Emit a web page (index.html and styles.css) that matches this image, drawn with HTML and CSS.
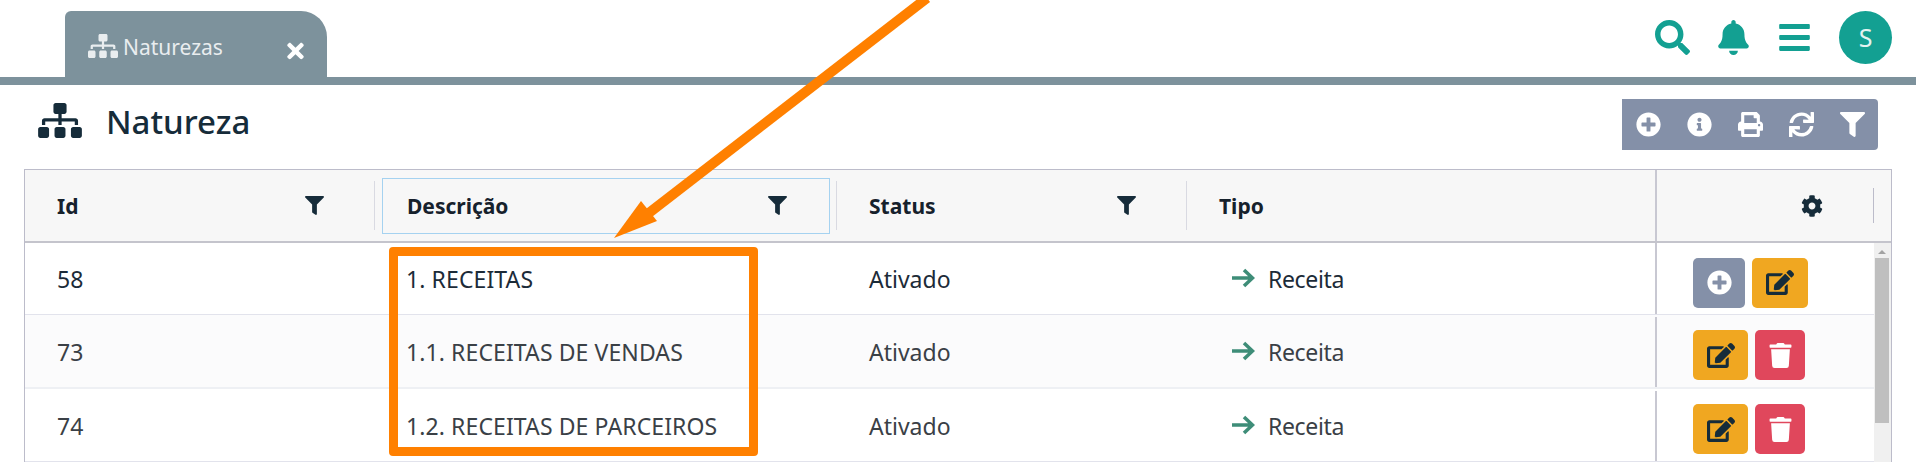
FILE: index.html
```html
<!DOCTYPE html>
<html lang="en">

<head>
    <meta charset="UTF-8">
    <title>Natureza</title>
    <link rel="stylesheet" href="styles.css">
</head>

<body>
    <svg class="sprite" xmlns="http://www.w3.org/2000/svg">
        <symbol id="i-sitemap" viewBox="0 0 640 512"><path d="M128 352H32c-17.67 0-32 14.33-32 32v96c0 17.67 14.33 32 32 32h96c17.67 0 32-14.33 32-32v-96c0-17.67-14.33-32-32-32zm-24-80h192v48h48v-48h192v48h48v-57.59c0-21.17-17.23-38.41-38.41-38.41H344v-64h40c17.67 0 32-14.33 32-32V32c0-17.67-14.33-32-32-32H256c-17.67 0-32 14.33-32 32v96c0 17.67 14.33 32 32 32h40v64H94.41C73.23 224 56 241.23 56 262.41V320h48v-48zm264 80h-96c-17.67 0-32 14.33-32 32v96c0 17.67 14.33 32 32 32h96c17.67 0 32-14.33 32-32v-96c0-17.67-14.33-32-32-32zm240 0h-96c-17.67 0-32 14.33-32 32v96c0 17.67 14.33 32 32 32h96c17.67 0 32-14.33 32-32v-96c0-17.67-14.33-32-32-32z"/></symbol>
        <symbol id="i-filter" viewBox="0 0 512 512"><path d="M487.976 0H24.028C2.71 0-8.047 25.866 7.058 40.971L192 225.941V432c0 7.831 3.821 15.17 10.237 19.662l80 55.98C298.02 518.69 320 507.493 320 487.98V225.941l184.947-184.97C520.021 25.896 509.338 0 487.976 0z"/></symbol>
        <symbol id="i-search" viewBox="0 0 512 512"><path d="M505 442.7L405.3 343c-4.5-4.5-10.6-7-17-7H372c27.6-35.3 44-79.7 44-128C416 93.1 322.9 0 208 0S0 93.1 0 208s93.1 208 208 208c48.3 0 92.7-16.4 128-44v16.3c0 6.4 2.5 12.5 7 17l99.7 99.7c9.4 9.4 24.6 9.4 33.9 0l28.3-28.3c9.4-9.4 9.4-24.6.1-34zM208 336c-70.7 0-128-57.2-128-128 0-70.7 57.2-128 128-128 70.7 0 128 57.2 128 128 0 70.7-57.2 128-128 128z"/></symbol>
        <symbol id="i-bell" viewBox="0 0 448 512"><path d="M224 512c35.32 0 63.97-28.65 63.97-64H160.03c0 35.35 28.65 64 63.97 64zm215.39-149.71c-19.32-20.76-55.47-51.99-55.47-154.29 0-77.7-54.48-139.9-127.94-155.16V32c0-17.67-14.32-32-31.98-32s-31.98 14.33-31.98 32v20.84C118.56 68.1 64.08 130.3 64.08 208c0 102.3-36.15 133.53-55.47 154.29-6 6.45-8.66 14.16-8.61 21.71.11 16.4 12.98 32 32.1 32h383.8c19.12 0 32-15.6 32.1-32 .05-7.55-2.61-15.27-8.61-21.71z"/></symbol>
        <symbol id="i-bars" viewBox="0 0 448 512"><path d="M16 132h416c8.837 0 16-7.163 16-16V76c0-8.837-7.163-16-16-16H16C7.163 60 0 67.163 0 76v40c0 8.837 7.163 16 16 16zm0 160h416c8.837 0 16-7.163 16-16v-40c0-8.837-7.163-16-16-16H16c-8.837 0-16 7.163-16 16v40c0 8.837 7.163 16 16 16zm0 160h416c8.837 0 16-7.163 16-16v-40c0-8.837-7.163-16-16-16H16c-8.837 0-16 7.163-16 16v40c0 8.837 7.163 16 16 16z"/></symbol>
        <symbol id="i-plus" viewBox="0 0 512 512"><path d="M256 8C119 8 8 119 8 256s111 248 248 248 248-111 248-248S393 8 256 8zm144 276c0 6.6-5.4 12-12 12h-92v92c0 6.6-5.4 12-12 12h-56c-6.6 0-12-5.4-12-12v-92h-92c-6.6 0-12-5.4-12-12v-56c0-6.6 5.4-12 12-12h92v-92c0-6.6 5.4-12 12-12h56c6.6 0 12 5.4 12 12v92h92c6.6 0 12 5.4 12 12v56z"/></symbol>
        <symbol id="i-info" viewBox="0 0 512 512"><path d="M256 8C119.043 8 8 119.083 8 256c0 136.997 111.043 248 248 248s248-111.003 248-248C504 119.083 392.957 8 256 8zm0 110c23.196 0 42 18.804 42 42s-18.804 42-42 42-42-18.804-42-42 18.804-42 42-42zm56 254c0 6.627-5.373 12-12 12h-88c-6.627 0-12-5.373-12-12v-24c0-6.627 5.373-12 12-12h12v-64h-12c-6.627 0-12-5.373-12-12v-24c0-6.627 5.373-12 12-12h64c6.627 0 12 5.373 12 12v100h12c6.627 0 12 5.373 12 12v24z"/></symbol>
        <symbol id="i-print" viewBox="0 0 512 512"><path d="M448 192V77.25c0-8.49-3.37-16.62-9.37-22.63L393.37 9.37c-6-6-14.14-9.37-22.63-9.37H96C78.33 0 64 14.33 64 32v160c-35.35 0-64 28.65-64 64v112c0 8.84 7.16 16 16 16h48v96c0 17.67 14.33 32 32 32h320c17.67 0 32-14.33 32-32v-96h48c8.84 0 16-7.16 16-16V256c0-35.35-28.65-64-64-64zm-64 256H128v-96h256v96zm0-224H128V64h192v48c0 8.84 7.16 16 16 16h48v96zm48 72c-13.25 0-24-10.75-24-24 0-13.26 10.75-24 24-24s24 10.74 24 24c0 13.25-10.75 24-24 24z"/></symbol>
        <symbol id="i-sync" viewBox="0 0 512 512"><path d="M440.65 12.57l4 82.77A247.16 247.16 0 0 0 255.83 8C134.73 8 33.91 94.92 12.29 209.82A12 12 0 0 0 24.09 224h49.05a12 12 0 0 0 11.67-9.26 175.91 175.91 0 0 1 317-56.94l-101.46-4.86a12 12 0 0 0-12.57 12v47.41a12 12 0 0 0 12 12H500a12 12 0 0 0 12-12V12a12 12 0 0 0-12-12h-47.37a12 12 0 0 0-11.98 12.57zM255.83 432a175.61 175.61 0 0 1-146-77.8l101.8 4.87a12 12 0 0 0 12.57-12v-47.4a12 12 0 0 0-12-12H12a12 12 0 0 0-12 12V500a12 12 0 0 0 12 12h47.35a12 12 0 0 0 12-12.6l-4.15-82.57A247.17 247.17 0 0 0 255.83 504c121.11 0 221.93-86.92 243.55-201.82a12 12 0 0 0-11.8-14.18h-49.05a12 12 0 0 0-11.67 9.26A175.86 175.86 0 0 1 255.83 432z"/></symbol>
        <symbol id="i-cog" viewBox="0 0 512 512"><path d="M487.4 315.7l-42.6-24.6c4.3-23.2 4.3-47 0-70.2l42.6-24.6c4.9-2.8 7.1-8.6 5.5-14-11.1-35.6-30-67.8-54.7-94.6-3.8-4.1-10-5.1-14.8-2.3L380.8 110c-17.9-15.4-38.5-27.3-60.8-35.1V25.8c0-5.6-3.9-10.5-9.4-11.7-36.7-8.2-74.3-7.8-109.2 0-5.5 1.2-9.4 6.1-9.4 11.7V75c-22.2 7.9-42.8 19.8-60.8 35.1L88.7 85.5c-4.9-2.8-11-1.9-14.8 2.3-24.7 26.7-43.6 58.9-54.7 94.6-1.7 5.4.6 11.2 5.5 14L67.3 221c-4.3 23.2-4.3 47 0 70.2l-42.6 24.6c-4.9 2.8-7.1 8.6-5.5 14 11.1 35.6 30 67.8 54.7 94.6 3.8 4.1 10 5.1 14.8 2.3l42.6-24.6c17.9 15.4 38.5 27.3 60.8 35.1v49.2c0 5.6 3.9 10.5 9.4 11.7 36.7 8.2 74.3 7.8 109.2 0 5.5-1.2 9.4-6.1 9.4-11.7v-49.2c22.2-7.9 42.8-19.8 60.8-35.1l42.6 24.6c4.9 2.8 11 1.9 14.8-2.3 24.7-26.7 43.6-58.9 54.7-94.6 1.5-5.5-.7-11.3-5.6-14.1zM256 336c-44.1 0-80-35.9-80-80s35.9-80 80-80 80 35.9 80 80-35.9 80-80 80z"/></symbol>
        <symbol id="i-times" viewBox="0 0 352 512"><path d="M242.72 256l100.07-100.07c12.28-12.28 12.28-32.19 0-44.48l-22.24-22.24c-12.28-12.28-32.19-12.28-44.48 0L176 189.28 75.93 89.21c-12.28-12.28-32.19-12.28-44.48 0L9.21 111.45c-12.28 12.28-12.28 32.19 0 44.48L109.28 256 9.21 356.07c-12.28 12.28-12.28 32.19 0 44.48l22.24 22.24c12.28 12.28 32.2 12.28 44.48 0L176 322.72l100.07 100.07c12.28 12.28 32.2 12.28 44.48 0l22.24-22.24c12.28-12.28 12.28-32.19 0-44.48L242.72 256z"/></symbol>
        <symbol id="i-edit" viewBox="0 0 576 512"><path d="M402.6 83.2l90.2 90.2c3.8 3.8 3.8 10 0 13.8L274.4 405.6l-92.8 10.3c-12.4 1.4-22.9-9.1-21.5-21.5l10.3-92.8L388.8 83.2c3.8-3.8 10-3.8 13.8 0zm162-22.9l-48.8-48.8c-15.2-15.2-39.9-15.2-55.2 0l-35.4 35.4c-3.8 3.8-3.8 10 0 13.8l90.2 90.2c3.8 3.8 10 3.8 13.8 0l35.4-35.4c15.2-15.3 15.2-40 0-55.2zM384 346.2V448H64V128h229.8c3.2 0 6.2-1.3 8.5-3.5l40-40c7.6-7.6 2.2-20.5-8.5-20.5H48C21.5 64 0 85.5 0 112v352c0 26.5 21.5 48 48 48h352c26.5 0 48-21.5 48-48V306.2c0-10.7-12.9-16-20.5-8.5l-40 40c-2.2 2.3-3.5 5.3-3.5 8.5z"/></symbol>
        <symbol id="i-trash" viewBox="0 0 448 512"><path d="M432 32H312l-9.4-18.7A24 24 0 0 0 281.1 0H166.8a23.72 23.72 0 0 0-21.4 13.3L136 32H16A16 16 0 0 0 0 48v32a16 16 0 0 0 16 16h416a16 16 0 0 0 16-16V48a16 16 0 0 0-16-16zM53.2 467a48 48 0 0 0 47.9 45h245.8a48 48 0 0 0 47.9-45L416 128H32z"/></symbol>
        <symbol id="i-arrow" viewBox="0 0 24 20"><path d="M1 10H21M13 2l8.500 8-8.500 8" fill="none" stroke="currentColor" stroke-width="3.6"/></symbol>
    </svg>

    <header class="topbar">
        <div class="tab">
            <svg class="tab-icon"><use href="#i-sitemap"/></svg>
            <span class="tab-label">Naturezas</span>
            <svg class="tab-close"><use href="#i-times"/></svg>
        </div>
        <div class="top-actions">
            <svg class="top-icon search"><use href="#i-search"/></svg>
            <svg class="top-icon bell"><use href="#i-bell"/></svg>
            <svg class="top-icon bars"><use href="#i-bars"/></svg>
            <div class="avatar">S</div>
        </div>
    </header>

    <section class="page-head">
        <svg class="page-icon"><use href="#i-sitemap"/></svg>
        <h1>Natureza</h1>
        <div class="toolbar">
            <svg><use href="#i-plus"/></svg>
            <svg><use href="#i-info"/></svg>
            <svg><use href="#i-print"/></svg>
            <svg><use href="#i-sync"/></svg>
            <svg><use href="#i-filter"/></svg>
        </div>
    </section>

    <div class="table">
        <div class="thead">
            <div class="th col-id">
                <span class="th-label">Id</span>
                <svg class="th-filter"><use href="#i-filter"/></svg>
                <i class="sep sep-id"></i>
            </div>
            <div class="th col-desc">
                <div class="th-focus">
                    <span class="th-label">Descrição</span>
                    <svg class="th-filter"><use href="#i-filter"/></svg>
                </div>
                <i class="sep sep-desc"></i>
            </div>
            <div class="th col-status">
                <span class="th-label">Status</span>
                <svg class="th-filter"><use href="#i-filter"/></svg>
                <i class="sep sep-id"></i>
            </div>
            <div class="th col-tipo">
                <span class="th-label">Tipo</span>
            </div>
            <div class="th col-actions">
                <svg class="th-cog"><use href="#i-cog"/></svg>
                <i class="sep sep-cog"></i>
            </div>
        </div>

        <div class="tbody">
            <div class="rows">
                <div class="row row-first">
                    <div class="td col-id">58</div>
                    <div class="td col-desc">1. RECEITAS</div>
                    <div class="td col-status">Ativado</div>
                    <div class="td col-tipo"><svg class="tipo-arrow"><use href="#i-arrow"/></svg>Receita</div>
                    <div class="td col-actions">
                        <span class="btn btn-add"><svg><use href="#i-plus"/></svg></span>
                        <span class="btn btn-edit"><svg><use href="#i-edit"/></svg></span>
                    </div>
                </div>
                <div class="row row-even">
                    <div class="td col-id">73</div>
                    <div class="td col-desc">1.1. RECEITAS DE VENDAS</div>
                    <div class="td col-status">Ativado</div>
                    <div class="td col-tipo"><svg class="tipo-arrow"><use href="#i-arrow"/></svg>Receita</div>
                    <div class="td col-actions">
                        <span class="btn btn-edit wide"><svg><use href="#i-edit"/></svg></span>
                        <span class="btn btn-del"><svg><use href="#i-trash"/></svg></span>
                    </div>
                </div>
                <div class="row row-next">
                    <div class="td col-id">74</div>
                    <div class="td col-desc">1.2. RECEITAS DE PARCEIROS</div>
                    <div class="td col-status">Ativado</div>
                    <div class="td col-tipo"><svg class="tipo-arrow"><use href="#i-arrow"/></svg>Receita</div>
                    <div class="td col-actions">
                        <span class="btn btn-edit wide"><svg><use href="#i-edit"/></svg></span>
                        <span class="btn btn-del"><svg><use href="#i-trash"/></svg></span>
                    </div>
                </div>
            </div>
            <div class="scrollbar">
                <div class="scroll-up"></div>
                <div class="scroll-thumb"></div>
            </div>
        </div>
    </div>

    <!-- annotation drawn on top of the screenshot -->
    <div class="mark-box"></div>
    <svg class="mark-arrow" viewBox="0 0 1916 463">
        <line x1="927" y1="-2" x2="645" y2="216"/>
        <polygon points="614,238 641,201 657,221"/>
    </svg>
</body>

</html>
```

FILE: styles.css
```css
* {
    box-sizing: border-box;
}

html,
body {
    height: 463px;
    overflow: hidden;
}

body {
    position: relative;
    margin: 0;
    background-color: #fff;
    color: #3a4046;
    font-family: "Noto Sans", "Open Sans", sans-serif;
    font-size: 23px;
}

svg {
    fill: currentColor;
}

.sprite {
    display: none;
}

/* top bar */
.topbar {
    display: flex;
    justify-content: space-between;
    height: 85px;
    padding-left: 65px;
    border-bottom: 8px solid #7d929c;
}

.tab {
    display: flex;
    align-items: flex-start;
    width: 262px;
    height: 66px;
    margin-top: 11px;
    padding: 23px 23px 0 23px;
    background-color: #7d929c;
    border-radius: 6px 26px 0 0;
    color: #e9edef;
}

.tab-icon {
    width: 30px;
    height: 24px;
}

.tab-label {
    flex: 1;
    margin-left: 5px;
    font-size: 21px;
    line-height: 26px;
}

.tab-close {
    width: 17px;
    height: 24px;
    margin-top: 5px;
    color: #fff;
}

.top-actions {
    display: flex;
    align-items: flex-start;
    padding: 11px 24px 0 0;
    color: #13a092;
}

.top-icon {
    height: 35px;
    margin-top: 9px;
}

.search {
    width: 35px;
}

.bell {
    width: 31px;
    margin-left: 28px;
}

.bars {
    width: 31px;
    margin-left: 30px;
}

.avatar {
    width: 53px;
    height: 53px;
    margin-left: 29px;
    border-radius: 50%;
    background-color: #13a092;
    color: #e3f3f1;
    font-size: 25px;
    line-height: 53px;
    text-align: center;
}

/* page title */
.page-head {
    display: flex;
    align-items: flex-start;
    height: 84px;
    padding: 18px 38px 0 38px;
}

.page-icon {
    width: 44px;
    height: 35px;
    color: #162c3a;
}

h1 {
    flex: 1;
    margin: -3px 0 0 24px;
    color: #162c3a;
    font-size: 33px;
    font-weight: 500;
    line-height: 44px;
}

.toolbar {
    display: flex;
    align-items: center;
    gap: 26px;
    height: 51px;
    width: 256px;
    margin-top: -4px;
    padding-left: 14px;
    background-color: #8490a8;
    border-radius: 0 4px 4px 0;
    color: #fff;
}

.toolbar svg {
    width: 25px;
    height: 25px;
}

/* table */
.table {
    margin: 0 24px;
    border: 1px solid #bcbcca;
    border-bottom: none;
}

.thead {
    display: flex;
    height: 73px;
    background-color: #f7f7f7;
    border-bottom: 2px solid #c4c4cc;
    color: #16212c;
}

.th {
    display: flex;
    align-items: center;
}

.th-label {
    flex: 1;
    font-size: 21px;
    font-weight: 700;
}

.th-filter {
    width: 19px;
    height: 19px;
    color: #162c3a;
}

.th-cog {
    width: 22px;
    height: 22px;
    margin-left: 144px;
    color: #162c3a;
}

.sep {
    display: block;
    flex: none;
    width: 1px;
    height: 49px;
    background-color: #d9dae2;
}

.sep-id {
    margin-left: 50px;
}

.sep-desc {
    margin-left: 6px;
}

.sep-cog {
    margin-left: 50px;
    height: 35px;
    background-color: #bcbcca;
}

.th-focus {
    display: flex;
    align-items: center;
    width: 448px;
    height: 56px;
    padding: 0 42px 0 24px;
    border: 1px solid #a5d2f0;
}

.col-id {
    width: 350px;
    padding-left: 32px;
}

.col-desc {
    width: 462px;
    padding-left: 7px;
}

.col-status {
    width: 350px;
    padding-left: 32px;
}

.col-tipo {
    width: 468px;
    padding-left: 32px;
}

.col-actions {
    width: 236px;
    border-left: 2px solid #c8c8d2;
}

.tbody {
    display: flex;
}

.rows {
    flex: 1;
}

.row {
    display: flex;
    height: 73px;
    border-bottom: 1px solid #e2e3ec;
}

.row-first {
    height: 72px;
    color: #1c2b38;
}

.row-even {
    height: 74px;
    background-color: #fbfbfc;
    border-bottom: 2px solid #eef0f4;
}

.row-even,
.row-next {
    padding-top: 2px;
}

.td {
    display: flex;
    align-items: center;
}

.td.col-desc {
    padding-left: 31px;
    letter-spacing: 0.1px;
}

.td.col-tipo {
    padding-left: 44px;
    letter-spacing: -0.35px;
}

.td.col-actions {
    width: 219px;
    gap: 7px;
    padding: 8px 0 0 36px;
}

.row-even .td.col-actions,
.row-next .td.col-actions {
    padding-top: 6px;
}

.tipo-arrow {
    width: 24px;
    height: 20px;
    margin: -2px 13px 0 0;
    color: #3e8d78;
}

.btn {
    display: flex;
    align-items: center;
    justify-content: center;
    width: 50px;
    height: 50px;
    border-radius: 5px;
}

.btn svg {
    width: 25px;
    height: 25px;
}

.btn-add {
    width: 52px;
    background-color: #8490a8;
    color: #fff;
}

.btn-edit {
    width: 56px;
    background-color: #f0a721;
    color: #162c3a;
}

.btn-edit svg {
    width: 28px;
}

.btn-edit.wide {
    width: 55px;
}

.btn-del {
    background-color: #e0475c;
    color: #fff;
}

.scrollbar {
    width: 17px;
    background-color: #f0f0f0;
    padding: 0 2px 0 1px;
}

.scroll-up {
    width: 0;
    margin: 7px auto 4px;
    border-left: 4px solid transparent;
    border-right: 4px solid transparent;
    border-bottom: 4px solid #a3a3a3;
}

.scroll-thumb {
    height: 165px;
    margin-top: 3px;
    background-color: #bfbfbf;
}

/* orange annotation */
.mark-box {
    position: absolute;
    left: 389px;
    top: 247px;
    width: 369px;
    height: 209px;
    border: 9px solid #ff8000;
    border-radius: 4px;
}

.mark-arrow {
    position: absolute;
    left: 0;
    top: 0;
    width: 1916px;
    height: 463px;
    pointer-events: none;
}

.mark-arrow line {
    stroke: #ff8000;
    stroke-width: 10;
}

.mark-arrow polygon {
    fill: #ff8000;
}
```
